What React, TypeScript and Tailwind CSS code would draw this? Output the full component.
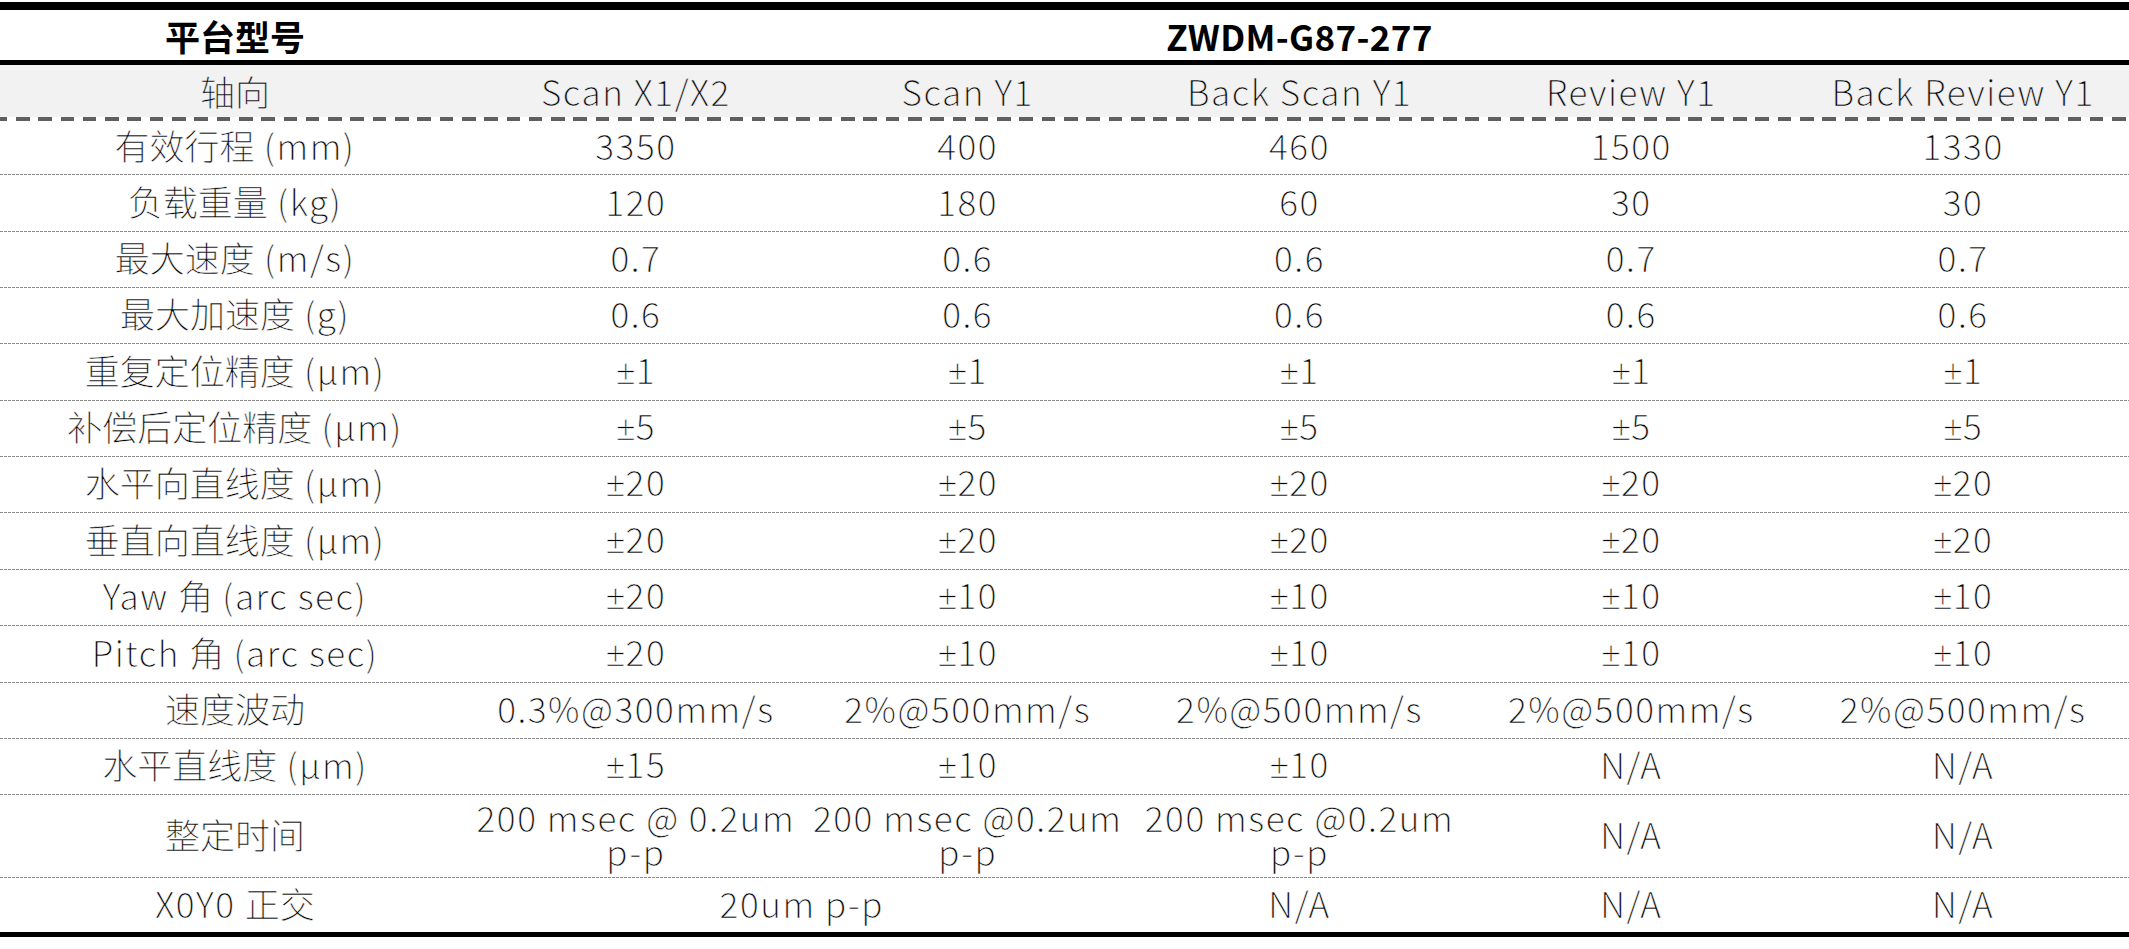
import React from 'react';

type Cell = { text: string; span?: number };

const columns = ['轴向', 'Scan X1/X2', 'Scan Y1', 'Back Scan Y1', 'Review Y1', 'Back Review Y1'];

// row height classes (line included) — measured off the reference
const rows: { h: string; cells: Cell[] }[] = [
  { h: 'h-[54px]', cells: [{ text: '有效行程 (mm)' }, { text: '3350' }, { text: '400' }, { text: '460' }, { text: '1500' }, { text: '1330' }] },
  { h: 'h-[57px]', cells: [{ text: '负载重量 (kg)' }, { text: '120' }, { text: '180' }, { text: '60' }, { text: '30' }, { text: '30' }] },
  { h: 'h-[56px]', cells: [{ text: '最大速度 (m/s)' }, { text: '0.7' }, { text: '0.6' }, { text: '0.6' }, { text: '0.7' }, { text: '0.7' }] },
  { h: 'h-[56px]', cells: [{ text: '最大加速度 (g)' }, { text: '0.6' }, { text: '0.6' }, { text: '0.6' }, { text: '0.6' }, { text: '0.6' }] },
  { h: 'h-[57px]', cells: [{ text: '重复定位精度 (µm)' }, { text: '±1' }, { text: '±1' }, { text: '±1' }, { text: '±1' }, { text: '±1' }] },
  { h: 'h-[56px]', cells: [{ text: '补偿后定位精度 (µm)' }, { text: '±5' }, { text: '±5' }, { text: '±5' }, { text: '±5' }, { text: '±5' }] },
  { h: 'h-[56px]', cells: [{ text: '水平向直线度 (µm)' }, { text: '±20' }, { text: '±20' }, { text: '±20' }, { text: '±20' }, { text: '±20' }] },
  { h: 'h-[57px]', cells: [{ text: '垂直向直线度 (µm)' }, { text: '±20' }, { text: '±20' }, { text: '±20' }, { text: '±20' }, { text: '±20' }] },
  { h: 'h-[56px]', cells: [{ text: 'Yaw 角 (arc sec)' }, { text: '±20' }, { text: '±10' }, { text: '±10' }, { text: '±10' }, { text: '±10' }] },
  { h: 'h-[57px]', cells: [{ text: 'Pitch 角 (arc sec)' }, { text: '±20' }, { text: '±10' }, { text: '±10' }, { text: '±10' }, { text: '±10' }] },
  { h: 'h-[56px]', cells: [{ text: '速度波动' }, { text: '0.3%@300mm/s' }, { text: '2%@500mm/s' }, { text: '2%@500mm/s' }, { text: '2%@500mm/s' }, { text: '2%@500mm/s' }] },
  { h: 'h-[56px]', cells: [{ text: '水平直线度 (µm)' }, { text: '±15' }, { text: '±10' }, { text: '±10' }, { text: 'N/A' }, { text: 'N/A' }] },
  {
    h: 'h-[83px]',
    cells: [
      { text: '整定时间' },
      { text: '200 msec @ 0.2um\np-p' },
      { text: '200 msec @0.2um\np-p' },
      { text: '200 msec @0.2um\np-p' },
      { text: 'N/A' },
      { text: 'N/A' },
    ],
  },
];

const lastRow: Cell[] = [{ text: 'X0Y0 正交' }, { text: '20um p-p', span: 2 }, { text: 'N/A' }, { text: 'N/A' }, { text: 'N/A' }];

const grid = 'grid grid-cols-[470px_repeat(5,minmax(0,1fr))]';

// CJK runs keep normal spacing, latin runs get the loose tracking of the original,
// ± comes from a latin face (the CJK one draws it full width)
function Mixed({ text }: { text: string }) {
  const parts = text.split(/([\u4e00-\u9fff]+|±)/).filter(Boolean);
  return (
    <>
      {parts.map((p, i) => {
        if (p === '±') {
          return (
            <span key={i} className="font-['Open_Sans',sans-serif] font-light tracking-normal">
              ±
            </span>
          );
        }
        if (/[\u4e00-\u9fff]/.test(p)) return <span key={i}>{p}</span>;
        return (
          <span key={i} className="tracking-[0.045em]">
            {p}
          </span>
        );
      })}
    </>
  );
}

function Dashed() {
  return <div className="h-px w-full bg-[repeating-linear-gradient(90deg,#8a8a8a_0_3px,transparent_3px_4px)]" />;
}

function CellBox({ cell }: { cell: Cell }) {
  return (
    <div
      className={`flex items-center justify-center pb-[4px] text-center leading-[0.98] whitespace-pre ${cell.span === 2 ? 'col-span-2' : ''}`}
    >
      <span>
        <Mixed text={cell.text} />
      </span>
    </div>
  );
}

export default function App() {
  return (
    <div className="min-h-screen bg-white pt-[2px] font-['Noto_Sans_CJK_SC',sans-serif] text-[35px] font-light text-black">
      {/* 平台型号 header */}
      <div className={`${grid} h-[63px] border-t-[8px] border-b-[5px] border-black font-bold`}>
        <div className="flex items-center justify-center pb-[6px]">平台型号</div>
        <div className="col-span-5 flex items-center justify-center pb-[6px] tracking-[0.01em]">ZWDM-G87-277</div>
      </div>

      {/* axis row */}
      <div className={`${grid} h-[52px] bg-[#f2f2f2] [-webkit-text-stroke:0.5px_#f2f2f2]`}>
        {columns.map((c) => (
          <div key={c} className="flex items-center justify-center pb-[7px]">
            <Mixed text={c} />
          </div>
        ))}
      </div>
      <div className="h-[4px] bg-[repeating-linear-gradient(90deg,#5f5f5f_0_7.3px,transparent_7.3px_16px,#5f5f5f_16px_22.3px)]" />

      <div className="[-webkit-text-stroke:0.5px_white]">
        {rows.map((r, i) => (
          <div key={i} className={`flex flex-col ${r.h}`}>
            <div className={`${grid} flex-1`}>
              {r.cells.map((c, j) => (
                <CellBox key={j} cell={c} />
              ))}
            </div>
            <Dashed />
          </div>
        ))}

        <div className={`${grid} h-[59px] border-b-[5px] border-black`}>
          {lastRow.map((c, j) => (
            <CellBox key={j} cell={c} />
          ))}
        </div>
      </div>
    </div>
  );
}
